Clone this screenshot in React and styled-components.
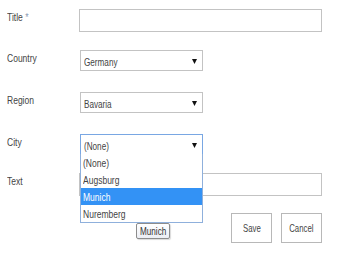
import styled, { createGlobalStyle } from "styled-components"

const GlobalStyle = createGlobalStyle`
    body{
        margin: 0;
        background: #ffffff;
        font-family: "Liberation Sans", Arial, sans-serif;
        color: #444444;
    }
`

export default function App() {
    const cities = ["(None)", "Augsburg", "Munich", "Nuremberg"]
    return (
        <>
            <GlobalStyle />
            <Form>
                <Row height={41}>
                    <Label><Cond>Title <Required>*</Required></Cond></Label>
                    <TextInput />
                </Row>
                <Row height={42}>
                    <Label><Cond>Country</Cond></Label>
                    <SelectBox>
                        <Cond>Germany</Cond>
                        <Arrow />
                    </SelectBox>
                </Row>
                <Row height={42}>
                    <Label><Cond>Region</Cond></Label>
                    <SelectBox>
                        <Cond>Bavaria</Cond>
                        <Arrow />
                    </SelectBox>
                </Row>
                <Row height={39} $top>
                    <Label><Cond>City</Cond></Label>
                    <Anchor>
                        <SelectBox focused>
                            <Cond>(None)</Cond>
                            <Arrow />
                        </SelectBox>
                        <Dropdown>
                            {cities.map((c) => (
                                <Option key={c} selected={c === "Munich"}>
                                    <Cond>{c}</Cond>
                                </Option>
                            ))}
                        </Dropdown>
                        <Tooltip><Cond>Munich</Cond></Tooltip>
                    </Anchor>
                </Row>
                <Row height={40}>
                    <Label><Cond>Text</Cond></Label>
                    <TextInput />
                </Row>
                <Buttons>
                    <Button><Cond>Save</Cond></Button>
                    <Button><Cond>Cancel</Cond></Button>
                </Buttons>
            </Form>
        </>
    )
}

function Arrow() {
    return (
        <svg width="5" height="6" viewBox="0 0 5 6">
            <polygon points="0,1 5,1 2.5,6" fill="#111" />
        </svg>
    )
}

// the screenshot's font is a tall, narrow face
const Cond = styled.span`
    display: inline-block;
    white-space: nowrap;
    transform: scaleX(0.74);
    transform-origin: left center;
`

const Form = styled.div`
    width: 315px;
    padding: 9px 0 0 7px;
    display: flex;
    flex-direction: column;
`

const Row = styled.div`
    height: ${props => props.height}px;
    display: flex;
    align-items: flex-start;
    position: relative;
    z-index: ${props => props.$top ? 2 : 1};
`

const Label = styled.div`
    width: 72px;
    flex-shrink: 0;
    font-size: 11.5px;
    color: #444444;
    padding-top: 2px;
`

const Required = styled.span`
    color: #8a9bb5;
`

const TextInput = styled.div`
    width: 243px;
    height: 23px;
    box-sizing: border-box;
    border: 1px solid #c3c3c3;
    background: #ffffff;
`

const Anchor = styled.div`
    position: relative;
`

const SelectBox = styled.div`
    width: 123px;
    height: 21px;
    box-sizing: border-box;
    margin-left: 1px;
    border: 1px solid ${props => props.focused ? "#79a7e3" : "#c3c3c3"};
    background: #ffffff;
    display: flex;
    align-items: center;
    justify-content: space-between;
    padding: 3px 5px 0 3px;
    font-size: 11px;
    color: #444444;

    svg{
        margin-top: -3px;
    }
`

const Dropdown = styled.div`
    position: absolute;
    top: 20px;
    left: 1px;
    width: 123px;
    box-sizing: border-box;
    border: 1px solid #8fb0dc;
    border-top: none;
    background: #ffffff;
    display: flex;
    flex-direction: column;
`

const Option = styled.div`
    height: 17px;
    line-height: 18px;
    padding-left: 2px;
    font-size: 11.5px;
    background: ${props => props.selected ? "#3392f5" : "#ffffff"};
    color: ${props => props.selected ? "#ffffff" : "#444444"};
`

const Tooltip = styled.div`
    position: absolute;
    top: 89px;
    left: 57px;
    width: 34px;
    height: 16px;
    padding: 0 3px;
    box-sizing: border-box;
    border: 1px solid #8c8c8c;
    border-radius: 2px;
    background: linear-gradient(#ffffff, #eceef4);
    box-shadow: 1px 1px 1px rgba(0, 0, 0, 0.15);
    font-size: 11px;
    line-height: 14px;
    color: #333333;
`

const Buttons = styled.div`
    display: flex;
    justify-content: flex-end;
    gap: 9px;
`

const Button = styled.div`
    width: 41px;
    height: 30px;
    box-sizing: border-box;
    border: 1px solid #b8b8b8;
    background: #ffffff;
    display: flex;
    align-items: center;
    justify-content: center;
    font-size: 10.5px;
    color: #444444;

    span{
        transform-origin: center;
    }
`
